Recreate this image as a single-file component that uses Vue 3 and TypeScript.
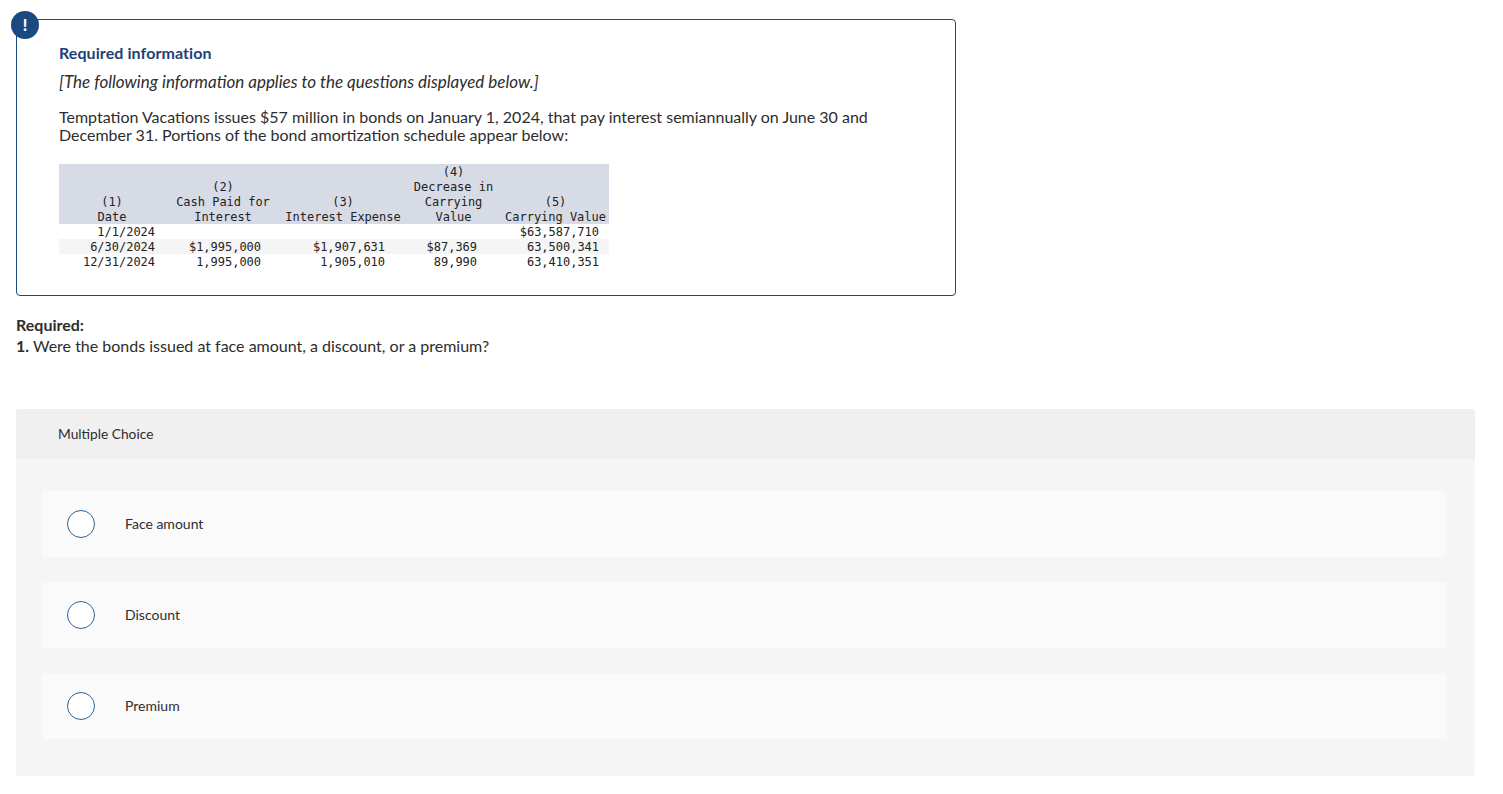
<script setup lang="ts">
interface Row {
  date: string
  cash: string
  expense: string
  decrease: string
  value: string
}

const rows: Row[] = [
  { date: '1/1/2024', cash: '', expense: '', decrease: '', value: '$63,587,710' },
  { date: '6/30/2024', cash: '$1,995,000', expense: '$1,907,631', decrease: '$87,369', value: '63,500,341' },
  { date: '12/31/2024', cash: '1,995,000', expense: '1,905,010', decrease: '89,990', value: '63,410,351' }
]

const choices = ['Face amount', 'Discount', 'Premium']
</script>

<template>
  <main class="page">
    <section class="info">
      <span class="badge">!</span>
      <h2 class="info-title">Required information</h2>
      <p class="info-note">[The following information applies to the questions displayed below.]</p>
      <p class="info-text">
        Temptation Vacations issues $57 million in bonds on January 1, 2024, that pay interest semiannually on June 30 and
        December 31. Portions of the bond amortization schedule appear below:
      </p>
      <table class="schedule">
        <colgroup>
          <col class="c1" />
          <col class="c2" />
          <col class="c3" />
          <col class="c4" />
          <col class="c5" />
        </colgroup>
        <thead>
          <tr>
            <th>(1)<br />Date</th>
            <th>(2)<br />Cash Paid for<br />Interest</th>
            <th>(3)<br />Interest Expense</th>
            <th>(4)<br />Decrease in<br />Carrying<br />Value</th>
            <th>(5)<br />Carrying Value</th>
          </tr>
        </thead>
        <tbody>
          <tr v-for="row in rows" :key="row.date">
            <td class="date">{{ row.date }}</td>
            <td class="cash">{{ row.cash }}</td>
            <td class="expense">{{ row.expense }}</td>
            <td class="decrease">{{ row.decrease }}</td>
            <td class="value">{{ row.value }}</td>
          </tr>
        </tbody>
      </table>
    </section>

    <div class="required">
      <strong>Required:</strong>
      <p><strong>1.</strong> Were the bonds issued at face amount, a discount, or a premium?</p>
    </div>

    <section class="quiz">
      <header class="quiz-head">Multiple Choice</header>
      <div class="quiz-body">
        <label v-for="choice in choices" :key="choice" class="choice">
          <span class="radio"></span>
          <span class="choice-label">{{ choice }}</span>
        </label>
      </div>
    </section>
  </main>
</template>

<style>
body {
  background: #fff;
}
</style>

<style scoped>
.page {
  padding: 19px 28px 18px 16px;
  font-family: Lato, "Noto Sans", sans-serif;
  color: #2d2d2d;
}

.info {
  position: relative;
  box-sizing: border-box;
  width: 940px;
  height: 277px;
  padding: 23px 42px 0;
  border: 1px solid #1a4a80;
  border-radius: 4px;
}

.badge {
  position: absolute;
  top: -9px;
  left: -6px;
  width: 28px;
  height: 28px;
  border-radius: 50%;
  background: #1a4a80;
  color: #fff;
  font-size: 16px;
  font-weight: 900;
  line-height: 28px;
  text-align: center;
}

.info-title {
  margin: 0;
  color: #1f3f77;
  font-size: 16px;
  font-weight: 700;
  letter-spacing: 0.08px;
  line-height: 20px;
}

.info-note {
  margin: 9px 0 0;
  font-size: 17px;
  font-style: italic;
  line-height: 20px;
}

.info-text {
  margin: 16px 0 0;
  font-size: 16px;
  line-height: 18px;
}

.schedule {
  margin-top: 20px;
  width: 550px;
  table-layout: fixed;
  border-collapse: collapse;
  border-spacing: 0;
  font-family: "DejaVu Sans Mono", "Liberation Mono", monospace;
  font-size: 12px;
  letter-spacing: -0.02px;
  line-height: 15px;
  color: #222;
}

.c1 { width: 106px; }
.c2 { width: 116px; }
.c3 { width: 124px; }
.c4 { width: 97px; }
.c5 { width: 107px; }

/* row backgrounds stay put while the cell text sits 1px lower */
.schedule thead tr {
  background: #d7dbe6;
}

.schedule tbody tr:nth-child(2) {
  background: #f5f5f5;
}

.schedule th,
.schedule td {
  transform: translateY(1px);
}

.schedule th {
  padding: 0;
  font-weight: 400;
  text-align: center;
  vertical-align: bottom;
  white-space: nowrap;
}

.schedule td {
  padding: 0;
  height: 15px;
  text-align: right;
  white-space: nowrap;
}

.date,
.value {
  padding-right: 10px !important;
}

.cash,
.expense {
  padding-right: 20px !important;
}

.decrease {
  padding-right: 25px !important;
}

.required {
  margin-top: 18px;
  font-size: 16px;
  line-height: 21px;
}

.required p {
  margin: 0;
}

.quiz {
  margin-top: 53px;
  border-radius: 3px;
  overflow: hidden;
  background: #f5f5f5;
}

.quiz-head {
  padding-left: 42px;
  background: #f0f0f0;
  font-size: 13.75px;
  line-height: 50px;
}

.quiz-body {
  display: flex;
  flex-direction: column;
  gap: 25px;
  padding: 32px 28px 37px 26px;
}

.choice {
  display: flex;
  align-items: center;
  gap: 30px;
  height: 66px;
  padding-left: 25px;
  border-radius: 4px;
  background: #fafafa;
  font-size: 14px;
}

.choice-label {
  padding-bottom: 2px;
}

.radio {
  box-sizing: border-box;
  width: 28px;
  height: 28px;
  border: 1.5px solid #2c6496;
  border-radius: 50%;
  background: #fff;
}
</style>
